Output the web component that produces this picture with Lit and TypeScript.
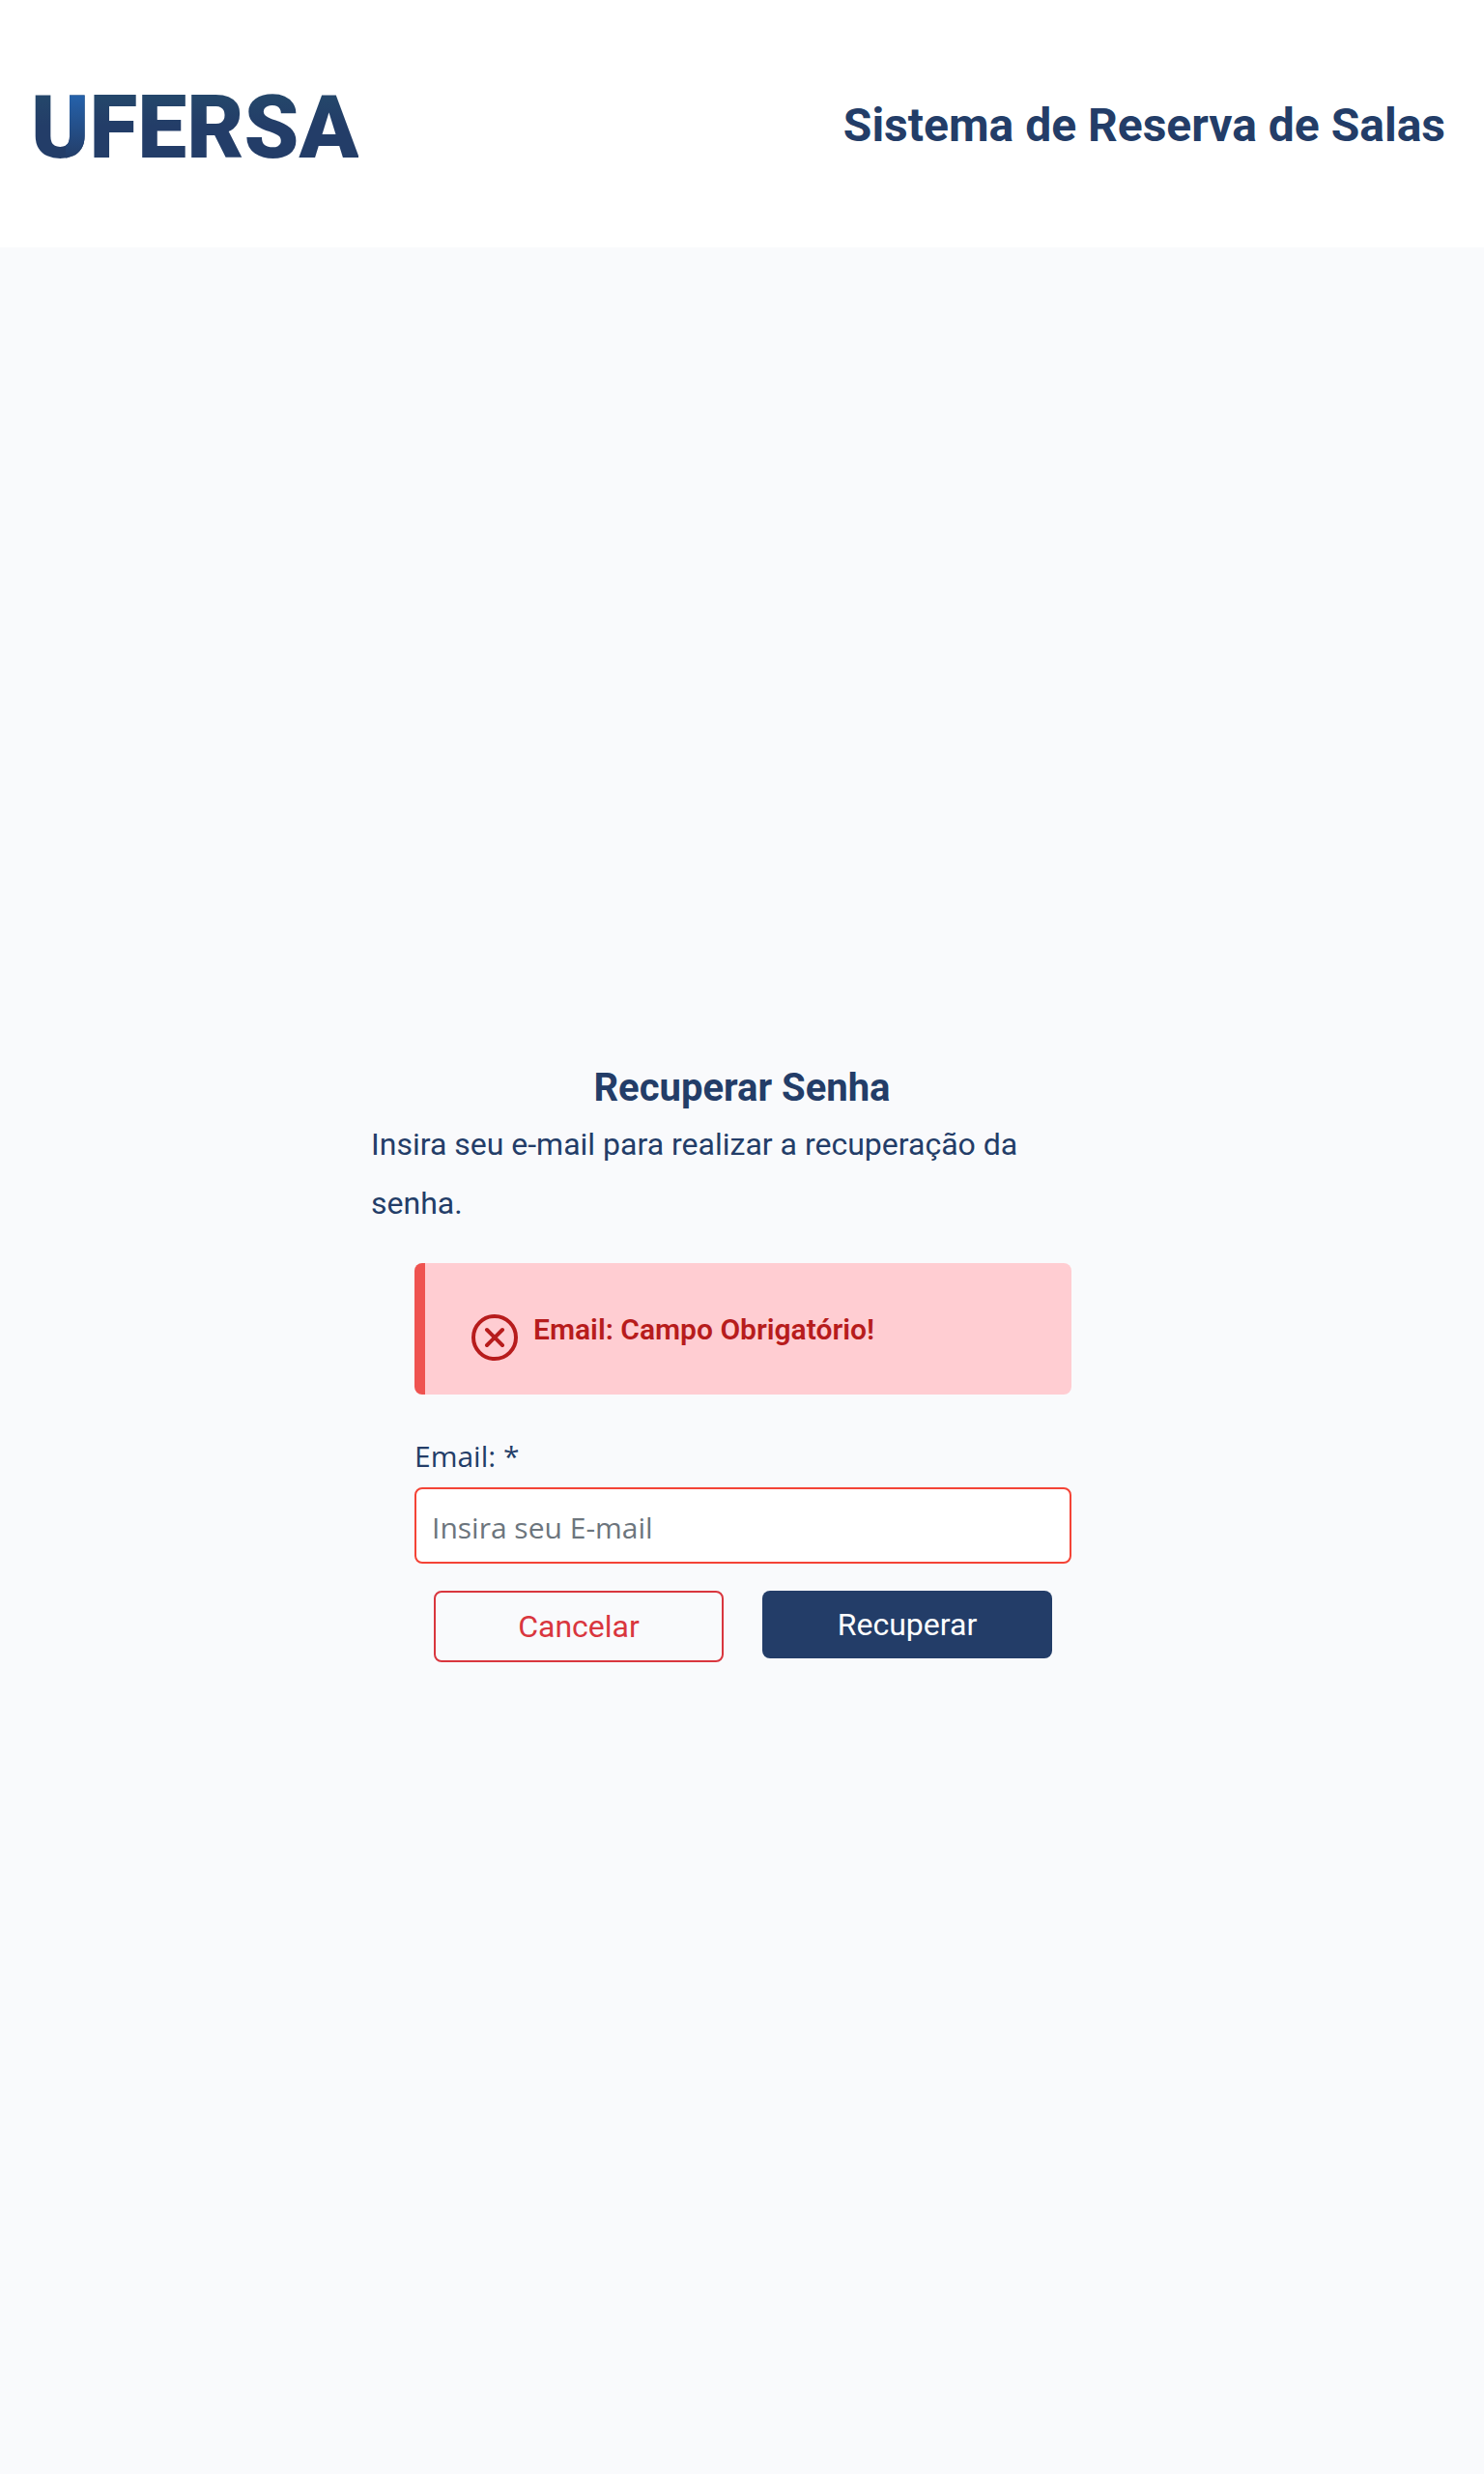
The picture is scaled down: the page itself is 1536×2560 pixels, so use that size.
import { LitElement, html, css } from "lit";
import { customElement, state } from "lit/decorators.js";

@customElement("app-root")
export class AppRoot extends LitElement {
  static styles = css`
    :host {
      display: flex;
      flex-direction: column;
      min-height: 100vh;
      background: #f9fafc;
      color: #233d68;
      font-family: Roboto, "Liberation Sans", sans-serif;
      font-size: 32px;
    }
    * {
      box-sizing: border-box;
    }
    .header {
      display: flex;
      align-items: center;
      justify-content: space-between;
      padding: 82px 40px 78px 32px;
      background: #fff;
    }
    .logo {
      padding-top: 4px;
      font-size: 91px;
      line-height: 92px;
      font-weight: 900;
      text-decoration: none;
      color: transparent;
      background:
        linear-gradient(#2560a8 20%, #233d68 85%) 36px 0 / 20px 100% no-repeat,
        linear-gradient(#24466a 20%, #233d68 50%);
      background-clip: text;
      -webkit-background-clip: text;
    }
    .system {
      margin: 0;
      font-size: 48px;
      line-height: 56px;
      font-weight: 700;
    }
    .main {
      flex: 1;
      display: flex;
      flex-direction: column;
      align-items: center;
      justify-content: center;
    }
    .panel {
      width: 50%;
      display: flex;
      flex-direction: column;
    }
    .title {
      margin: 0;
      padding-top: 2px;
      font-size: 40px;
      line-height: 56px;
      font-weight: 700;
      text-align: center;
    }
    .intro {
      margin: 0 0 31px;
      line-height: 61px;
    }
    .form {
      display: flex;
      flex-direction: column;
      margin: 0 43px 0 45px;
    }
    .alert {
      display: flex;
      gap: 16px;
      padding: 49px 48px 47px;
      border-left: 11px solid #ef5350;
      border-radius: 8px;
      background: #ffcdd2;
      color: #b71c1c;
      font-size: 30px;
      line-height: 40px;
      font-weight: 600;
    }
    .alert-icon {
      flex: none;
      width: 48px;
      height: 48px;
      margin: 4px 0 -12px;
    }
    .label {
      margin: 40px 0 8px;
      font-family: "Open Sans", sans-serif;
      font-size: 30px;
      line-height: 48px;
    }
    .input {
      width: 100%;
      height: 79px;
      padding: 4px 16px 0;
      border: 2px solid #f44336;
      border-radius: 8px;
      background: #fff;
      color: #233d68;
      font-family: "Open Sans", sans-serif;
      font-size: 30px;
    }
    .input::placeholder {
      color: #6c757d;
      opacity: 1;
    }
    .actions {
      display: grid;
      grid-template-columns: 1fr 1fr;
      align-items: start;
      gap: 40px;
      margin: 28px 20px 0;
    }
    .button {
      padding: 16px;
      border: 0;
      border-radius: 8px;
      background: #233d68;
      color: #fff;
      font-family: inherit;
      font-size: 32px;
      line-height: 38px;
      cursor: pointer;
    }
    .cancel {
      border: 2px solid #d9363e;
      background: transparent;
      color: #d9363e;
    }
  `;

  @state() private email = "";

  private onInput(e: Event) {
    this.email = (e.target as HTMLInputElement).value;
  }

  render() {
    return html`
      <header class="header">
        <a class="logo" href="#">UFERSA</a>
        <h1 class="system">Sistema de Reserva de Salas</h1>
      </header>
      <main class="main">
        <section class="panel">
          <h2 class="title">Recuperar Senha</h2>
          <p class="intro">Insira seu e-mail para realizar a recuperação da senha.</p>
          <form class="form" novalidate @submit=${(e: Event) => e.preventDefault()}>
            <div class="alert" role="alert" id="email-error">
              <svg class="alert-icon" viewBox="0 0 48 48" fill="none" stroke="currentColor" aria-hidden="true">
                <circle cx="24" cy="24" r="22" stroke-width="4" />
                <path d="M16 16 32 32M32 16 16 32" stroke-width="4" stroke-linecap="round" />
              </svg>
              <span>Email: Campo Obrigatório!</span>
            </div>
            <label class="label" for="email">Email: *</label>
            <input
              class="input"
              id="email"
              type="email"
              placeholder="Insira seu E-mail"
              aria-invalid="true"
              aria-describedby="email-error"
              .value=${this.email}
              @input=${this.onInput}
            />
            <div class="actions">
              <button class="button cancel" type="button">Cancelar</button>
              <button class="button" type="submit">Recuperar</button>
            </div>
          </form>
        </section>
      </main>
    `;
  }
}
